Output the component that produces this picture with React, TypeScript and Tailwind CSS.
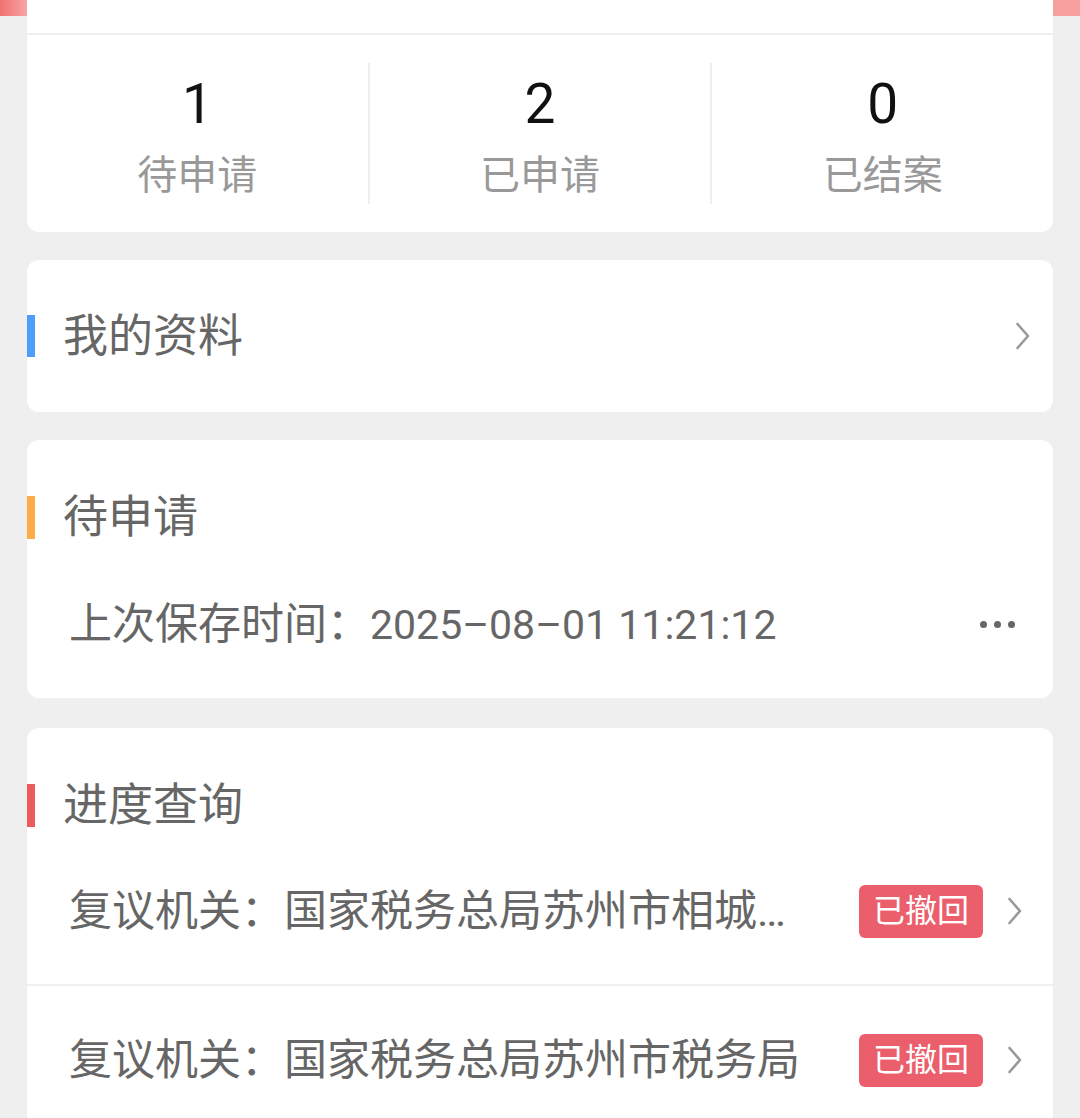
import React from 'react';

interface Stat {
  value: number;
  label: string;
}

interface Progress {
  id: number;
  office: string;
  status: string;
}

const stats: Stat[] = [
  { value: 1, label: '待申请' },
  { value: 2, label: '已申请' },
  { value: 0, label: '已结案' },
];

const progressList: Progress[] = [
  { id: 1, office: '国家税务总局苏州市相城区税务局', status: '已撤回' },
  { id: 2, office: '国家税务总局苏州市税务局', status: '已撤回' },
];

const Chevron: React.FC = () => (
  <svg width="16" height="28" viewBox="0 0 16 28" fill="none" className="shrink-0">
    <polyline points="2.5,2 13,14 2.5,26" stroke="#999" strokeWidth="2.6" strokeLinecap="round" strokeLinejoin="round" />
  </svg>
);

const SectionTitle: React.FC<{ title: string; bar: string }> = ({ title, bar }) => (
  <div className="flex items-center h-[110px] pt-[44px]">
    <div className={`w-[8px] h-[43px] ${bar}`} />
    <span className="ml-[28px] text-[45px] leading-none text-[#666]">{title}</span>
  </div>
);

const App: React.FC = () => {
  return (
    <div className="min-h-screen bg-[#efefef] pb-[40px] font-['Roboto','Noto_Sans_CJK_SC',sans-serif]">
      {/* top summary card, its header sits above the visible area */}
      <div className="flex">
        <div className="w-[27px] shrink-0">
          <div className="h-[16px] bg-gradient-to-r from-[#f07272] to-[#f8a3a3]" />
        </div>
        <div className="flex-1 bg-white rounded-b-[12px]">
          <div className="h-[35px] border-b-2 border-[#f0f0f0]" />
          <div className="flex py-[28px]">
            {stats.map((s, i) => (
              <div
                key={s.label}
                className={`flex-1 flex flex-col items-center h-[141px] ${i < stats.length - 1 ? 'border-r-2 border-[#eeeeee]' : ''}`}
              >
                <div className="text-[55px] leading-none text-[#111] mt-[14px]">{s.value}</div>
                <div className="text-[40px] leading-none text-[#999] mt-[24px]">{s.label}</div>
              </div>
            ))}
          </div>
        </div>
        <div className="w-[27px] shrink-0">
          <div className="h-[16px] bg-[#f6a0a0]" />
        </div>
      </div>

      <div className="px-[27px]">
        {/* 我的资料 */}
        <div className="mt-[28px] h-[152px] bg-white rounded-[12px] flex items-center pr-[22px]">
          <div className="w-[8px] h-[42px] bg-[#4e9cfb]" />
          <span className="ml-[28px] text-[45px] leading-none text-[#666]">我的资料</span>
          <div className="flex-1" />
          <Chevron />
        </div>

        {/* 待申请 */}
        <div className="mt-[28px] bg-white rounded-[12px]">
          <SectionTitle title="待申请" bar="bg-[#fdad45]" />
          <div className="h-[148px] flex items-center pl-[42px] pr-[38px]">
            <span className="text-[43px] leading-none text-[#666]">
              上次保存时间：<span className="text-[41px]">2025–08–01 11:21:12</span>
            </span>
            <div className="flex-1" />
            <div className="flex gap-[7px]">
              <span className="w-[7px] h-[7px] rounded-full bg-[#666]" />
              <span className="w-[7px] h-[7px] rounded-full bg-[#666]" />
              <span className="w-[7px] h-[7px] rounded-full bg-[#666]" />
            </div>
          </div>
        </div>

        {/* 进度查询 */}
        <div className="mt-[30px] bg-white rounded-[12px]">
          <SectionTitle title="进度查询" bar="bg-[#ee5b5b]" />
          {progressList.map((p, i) => (
            <div
              key={p.id}
              className={`h-[148px] flex items-center pl-[42px] pr-[30px] ${i < progressList.length - 1 ? 'border-b-2 border-[#f0f0f0]' : ''}`}
            >
              <span className="w-[745px] shrink-0 truncate text-[43px] leading-[52px] text-[#666]">复议机关：{p.office}</span>
              <div className="flex-1" />
              <span className="h-[53px] px-[14px] flex items-center rounded-[6px] bg-[#eb5f6d] text-white text-[32px] leading-none">
                {p.status}
              </span>
              <div className="ml-[24px]">
                <Chevron />
              </div>
            </div>
          ))}
        </div>
      </div>
    </div>
  );
};

export default App;
